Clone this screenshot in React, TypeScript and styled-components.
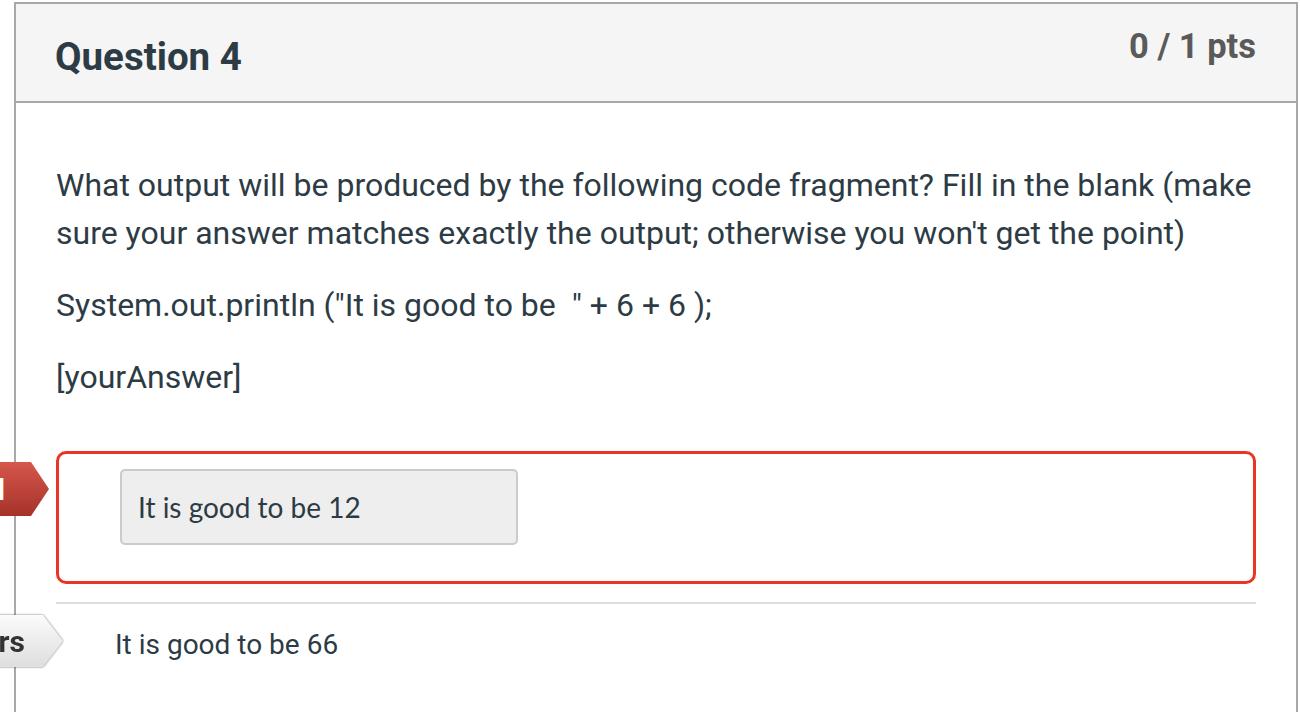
import React from 'react'
import styled, { createGlobalStyle } from 'styled-components'

const GlobalStyle = createGlobalStyle`
  html, body {
    margin: 0;
    padding: 0;
    background: #ffffff;
    overflow: hidden;
  }
  body {
    font-family: Roboto, "Noto Sans", sans-serif;
    color: #2d3b45;
  }
`

const Page = styled.div`
  padding: 2px 0 0 14px;
`

const QuestionCard = styled.div`
  width: 1284px;
  min-height: 760px;
  box-sizing: border-box;
  border: 2px solid #a8a8a8;
  background: #ffffff;
`

const Header = styled.div`
  display: flex;
  justify-content: space-between;
  align-items: flex-start;
  padding: 25px 40px 0 39px;
  box-sizing: border-box;
  height: 99px;
  border-bottom: 2px solid #a8a8a8;
  background: #f5f5f5;
`

const Title = styled.h2`
  margin: 9px 0 0;
  font-size: 38.5px;
  line-height: 38px;
  font-weight: 700;
  color: #2d3b45;
`

const Points = styled.div`
  font-size: 34.5px;
  line-height: 34px;
  font-weight: 700;
  color: #5a5a5a;
`

const Body = styled.div`
  padding: 58px 40px 0 40px;
`

const Para = styled.p`
  margin: 0 0 24px;
  font-size: 32px;
  line-height: 48px;
  color: #2d3b45;
`

const AnswerBlock = styled.div`
  position: relative;
  margin-top: 50px;
`

const AnswerBox = styled.div`
  height: 133px;
  box-sizing: border-box;
  border: 3px solid #ec3424;
  border-radius: 10px;
  padding: 15px 0 0 61px;
`

const FilledInput = styled.div`
  width: 398px;
  height: 76px;
  box-sizing: border-box;
  display: flex;
  align-items: center;
  padding-left: 16px;
  border: 2px solid #cbcbcb;
  border-radius: 5px;
  background: #eeeeee;
  font-family: Lato, "Noto Sans", sans-serif;
  font-size: 28px;
  color: #2d3b45;
`

type Tone = 'wrong' | 'correct'

// the answer arrows hang over the card's left edge, most of them off screen
const Flag = styled.div<{ $tone: Tone; $top: number; $reach: number; $height: number }>`
  position: absolute;
  top: ${p => p.$top}px;
  right: calc(100% - ${p => p.$reach}px);
  width: 260px;
  height: ${p => p.$height}px;
  filter: ${p => (p.$tone === 'correct' ? 'drop-shadow(0 0 0.8px rgba(0,0,0,0.55))' : 'none')};
`

const FlagShape = styled.div<{ $tone: Tone; $tip: number; $pad: number }>`
  height: 100%;
  display: flex;
  align-items: center;
  justify-content: flex-end;
  padding-right: ${p => p.$pad}px;
  box-sizing: border-box;
  clip-path: polygon(0 0, calc(100% - ${p => p.$tip}px) 0, 100% 50%, calc(100% - ${p => p.$tip}px) 100%, 0 100%);
  background: ${p =>
    p.$tone === 'wrong'
      ? 'linear-gradient(#d6574d, #a5322a)'
      : 'linear-gradient(#fbfbfb, #dedede)'};
  color: ${p => (p.$tone === 'wrong' ? '#ffffff' : '#333333')};
  font-size: 30px;
  font-weight: 700;
  white-space: nowrap;
`

const Separator = styled.div`
  margin-top: 18px;
  border-top: 2px solid #dddddd;
`

const CorrectRow = styled.div`
  position: relative;
  padding: 16px 0 0 59px;
  font-size: 28px;
  line-height: 49px;
  color: #2d3b45;
`

export default function App() {
  return (
    <>
      <GlobalStyle />
      <Page>
        <QuestionCard>
          <Header>
            <Title>Question 4</Title>
            <Points>0 / 1 pts</Points>
          </Header>
          <Body>
            <Para>
              What output will be produced by the following code fragment? Fill in the blank (make sure your answer
              matches exactly the output; otherwise you won't get the point)
            </Para>
            <Para>System.out.println ("It is good to be&nbsp; " + 6 + 6 );</Para>
            <Para>[yourAnswer]</Para>

            <AnswerBlock>
              <Flag $tone="wrong" $top={11} $reach={-7} $height={54}>
                <FlagShape $tone="wrong" $tip={18} $pad={44}>
                  You Answered
                </FlagShape>
              </Flag>
              <AnswerBox>
                <FilledInput>It is good to be 12</FilledInput>
              </AnswerBox>
            </AnswerBlock>

            <Separator />

            <CorrectRow>
              <Flag $tone="correct" $top={11} $reach={7} $height={52}>
                <FlagShape $tone="correct" $tip={20} $pad={38}>
                  Correct Answers
                </FlagShape>
              </Flag>
              It is good to be 66
            </CorrectRow>
          </Body>
        </QuestionCard>
      </Page>
    </>
  )
}
